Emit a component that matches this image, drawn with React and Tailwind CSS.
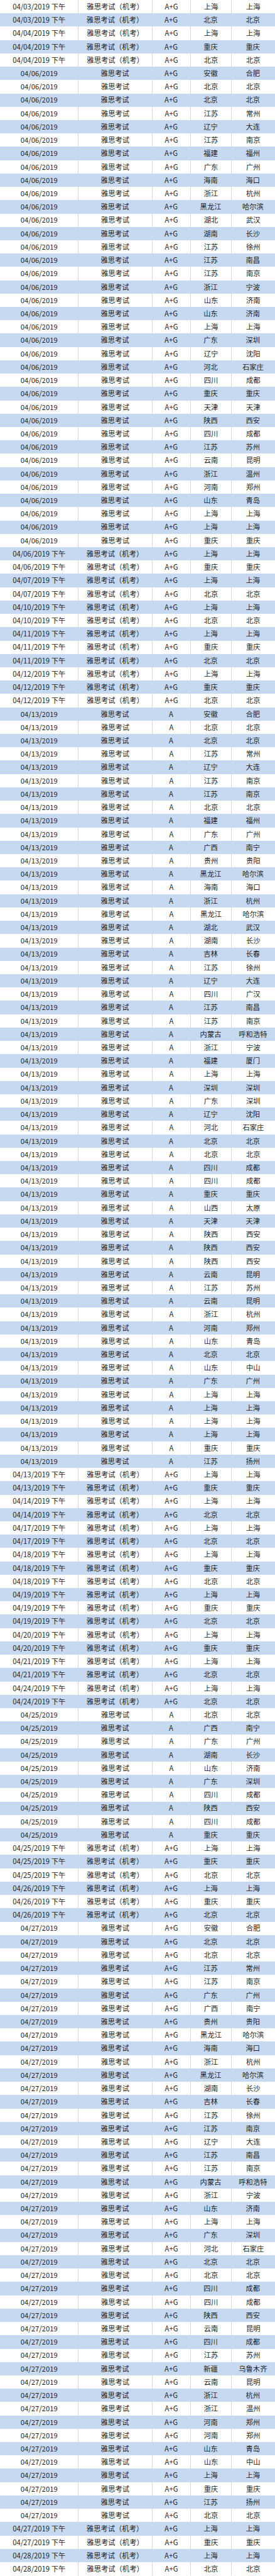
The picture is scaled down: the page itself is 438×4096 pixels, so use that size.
import React from "react";

const rows = [];
const pm = (d, cities) =>
  cities.split(" ").forEach((c) =>
    rows.push([`04/${d}/2019 下午`, "雅思考试（机考）", "A+G", c, c])
  );
const wr = (d, cat, pairs) =>
  pairs
    .trim()
    .split(/\s+/)
    .forEach((p) => {
      const [a, b] = p.split(",");
      rows.push([`04/${d}/2019`, "雅思考试", cat, a, b]);
    });

pm("03", "上海 北京");
pm("04", "上海 重庆 北京");
wr(
  "06",
  "A+G",
  `安徽,合肥 北京,北京 北京,北京 江苏,常州 辽宁,大连 江苏,南京 福建,福州 广东,广州 海南,海口 浙江,杭州 黑龙江,哈尔滨
   湖北,武汉 湖南,长沙 江苏,徐州 江苏,南昌 江苏,南京 浙江,宁波 山东,济南 山东,济南 上海,上海 广东,深圳 辽宁,沈阳 河北,石家庄
   四川,成都 重庆,重庆 天津,天津 陕西,西安 四川,成都 江苏,苏州 云南,昆明 浙江,温州 河南,郑州 山东,青岛 上海,上海 上海,上海 重庆,重庆`
);
pm("06", "上海 重庆");
pm("07", "上海 北京");
pm("10", "上海 北京");
pm("11", "上海 重庆 北京");
pm("12", "上海 重庆 北京");
wr(
  "13",
  "A",
  `安徽,合肥 北京,北京 北京,北京 江苏,常州 辽宁,大连 江苏,南京 江苏,南京 北京,北京 福建,福州 广东,广州 广西,南宁
   贵州,贵阳 黑龙江,哈尔滨 海南,海口 浙江,杭州 黑龙江,哈尔滨 湖北,武汉 湖南,长沙 吉林,长春 江苏,徐州 辽宁,大连 四川,广汉
   江苏,南昌 江苏,南京 内蒙古,呼和浩特 浙江,宁波 福建,厦门 上海,上海 深圳,深圳 广东,深圳 辽宁,沈阳 河北,石家庄 北京,北京
   北京,北京 四川,成都 四川,成都 重庆,重庆 山西,太原 天津,天津 陕西,西安 陕西,西安 陕西,西安 云南,昆明 江苏,苏州 云南,昆明
   浙江,杭州 河南,郑州 山东,青岛 北京,北京 山东,中山 广东,广州 上海,上海 上海,上海 上海,上海 上海,上海 重庆,重庆 江苏,扬州`
);
pm("13", "上海 重庆");
pm("14", "上海 北京");
pm("17", "上海 北京");
pm("18", "上海 重庆 北京");
pm("19", "上海 重庆 北京");
pm("20", "上海 重庆");
pm("21", "上海 北京");
pm("24", "上海 北京");
wr(
  "25",
  "A",
  `北京,北京 广西,南宁 广东,广州 湖南,长沙 山东,济南 广东,深圳 四川,成都 陕西,西安 四川,成都 重庆,重庆`
);
pm("25", "上海 重庆 北京");
pm("26", "上海 重庆 北京");
wr(
  "27",
  "A+G",
  `安徽,合肥 北京,北京 北京,北京 江苏,常州 江苏,南京 广东,广州 广西,南宁 贵州,贵阳 黑龙江,哈尔滨 海南,海口 浙江,杭州
   黑龙江,哈尔滨 湖南,长沙 吉林,长春 江苏,徐州 江苏,南京 辽宁,大连 江苏,南昌 江苏,南京 内蒙古,呼和浩特 浙江,宁波 山东,济南
   上海,上海 广东,深圳 河北,石家庄 北京,北京 北京,北京 四川,成都 四川,成都 陕西,西安 云南,昆明 四川,成都 江苏,苏州
   新疆,乌鲁木齐 云南,昆明 浙江,杭州 浙江,温州 河南,郑州 河南,郑州 山东,青岛 山东,中山 上海,上海 重庆,重庆 江苏,扬州 北京,北京`
);
pm("27", "上海 重庆");
pm("28", "上海 北京");

function Row({ r, i }) {
  const blue = i % 2 === 1;
  const line = blue ? "" : "border-l border-[#d9d9d9]";
  return (
    <div
      className={`grid flex-1 grid-cols-[124.4px_117.3px_61.6px_64.5px_70.2px] items-center ${
        blue ? "bg-[#c6d9f1]" : "bg-white"
      }`}
    >
      <div className="flex h-full items-center justify-center whitespace-nowrap">{r[0]}</div>
      <div className={`flex h-full items-center justify-center whitespace-nowrap ${line}`}>{r[1]}</div>
      <div className={`flex h-full items-center justify-center whitespace-nowrap ${line}`}>{r[2]}</div>
      <div className={`flex h-full items-center justify-center whitespace-nowrap ${line}`}>{r[3]}</div>
      <div className={`flex h-full items-center justify-center whitespace-nowrap ${line}`}>{r[4]}</div>
    </div>
  );
}

export default function App() {
  return (
    <div className="flex h-[4096px] w-[438px] flex-col overflow-hidden bg-white font-['Noto_Sans_CJK_SC','Noto_Sans',sans-serif] text-[11.3px] leading-none text-[#1e1e1e]">
      {rows.map((r, i) => (
        <Row key={i} r={r} i={i} />
      ))}
    </div>
  );
}
